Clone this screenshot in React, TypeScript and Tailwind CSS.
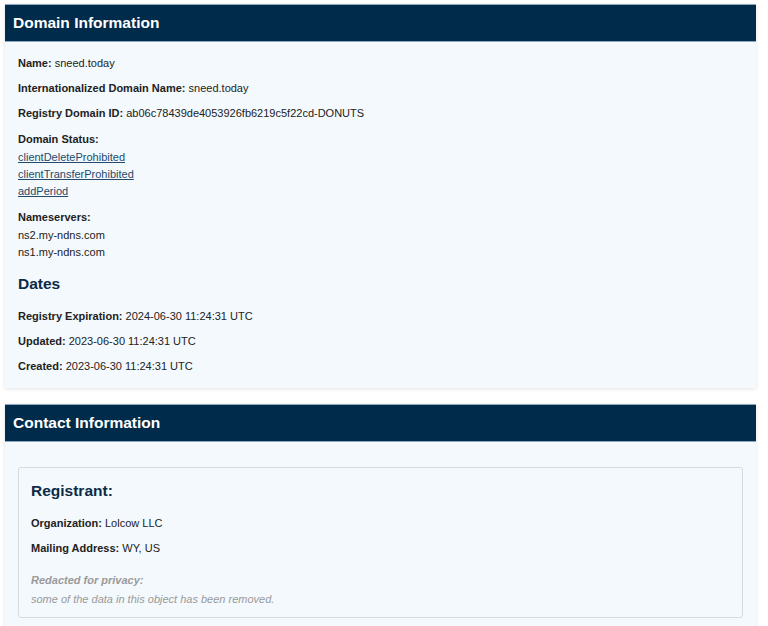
const statuses = ["clientDeleteProhibited", "clientTransferProhibited", "addPeriod"];
const nameservers = ["ns2.my-ndns.com", "ns1.my-ndns.com"];

function Field({ label, value }: { label: string; value: string }) {
  return (
    <p className="mb-[8px] leading-[17px]">
      <b className="font-bold">{label}:</b> {value}
    </p>
  );
}

function CardHeader({ title }: { title: string }) {
  return (
    <div className="flex h-[38px] items-center border-y border-[#8ea8bf] bg-[#002b4a] px-[8px]">
      <h2 className="text-[15.5px] font-bold text-white">{title}</h2>
    </div>
  );
}

export default function App() {
  return (
    <div
      className="min-h-screen bg-white pl-[5px] pt-[4px] text-[11px] text-[#222]"
      style={{ fontFamily: '"Liberation Sans", Arial, sans-serif' }}
    >
      <section className="w-[751px] bg-[#f3f9fd] shadow-[0_1px_4px_rgba(0,0,0,0.12)]">
        <CardHeader title="Domain Information" />
        <div className="px-[13px] pb-[5px] pt-[13px]">
          <Field label="Name" value="sneed.today" />
          <Field label="Internationalized Domain Name" value="sneed.today" />
          <Field label="Registry Domain ID" value="ab06c78439de4053926fb6219c5f22cd-DONUTS" />
          <div className="mb-[8px] mt-[1px] leading-[17px]">
            <b className="block leading-[19px]">Domain Status:</b>
            <ul>
              {statuses.map((s) => (
                <li key={s}>
                  <a href="#" className="text-[#24496b] underline">
                    {s}
                  </a>
                </li>
              ))}
            </ul>
          </div>
          <div className="leading-[17px]">
            <b className="block leading-[19px]">Nameservers:</b>
            <ul>
              {nameservers.map((n) => (
                <li key={n}>{n}</li>
              ))}
            </ul>
          </div>
          <h3 className="mb-[13px] mt-[12px] text-[15.5px] font-bold leading-[22px] text-[#0b2b47]">Dates</h3>
          <Field label="Registry Expiration" value="2024-06-30 11:24:31 UTC" />
          <Field label="Updated" value="2023-06-30 11:24:31 UTC" />
          <p className="mb-[8px] mt-[2px] leading-[17px]">
            <b>Created:</b> 2023-06-30 11:24:31 UTC
          </p>
        </div>
      </section>

      <section className="mt-[16px] w-[751px] bg-[#f3f9fd] pb-[20px] shadow-[0_1px_4px_rgba(0,0,0,0.12)]">
        <CardHeader title="Contact Information" />
        <div className="px-[13px] pt-[25px]">
          <div className="rounded-[3px] border border-[#d6dbdf] px-[12px] pb-[8px] pt-[13px]">
            <h3 className="mb-[14px] text-[15.5px] font-bold leading-[20px] text-[#0b2b47]">Registrant:</h3>
            <Field label="Organization" value="Lolcow LLC" />
            <Field label="Mailing Address" value="WY, US" />
            <div className="mt-[14px] leading-[19px] text-[#9a9a9a] italic">
              <b>Redacted for privacy:</b>
              <br />
              some of the data in this object has been removed.
            </div>
          </div>
        </div>
      </section>
    </div>
  );
}
